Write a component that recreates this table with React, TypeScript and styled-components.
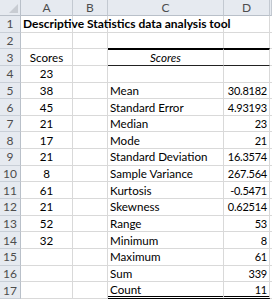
import React from "react";
import styled, { createGlobalStyle } from "styled-components";

const Global = createGlobalStyle`
  html, body { margin: 0; padding: 0; background: #ffffff; }
  body { font-family: Lato, "Liberation Sans", sans-serif; }
`;

const Sheet = styled.div`
  display: grid;
  grid-template-columns: 21px 52px 35px 116px 46px 2px;
  grid-template-rows: 16px repeat(17, 16.65px);
  width: 272px;
  height: 299px;
  overflow: hidden;
  font-size: 11.6px;
  color: #000;
`;

const Corner = styled.div`
  background: #e6eaf0;
  border-right: 1px solid #b9c0c9;
  border-bottom: 1px solid #b9c0c9;
  position: relative;
  &::after {
    content: "";
    position: absolute;
    right: 2px;
    bottom: 2px;
    width: 0;
    height: 0;
    border-left: 9px solid transparent;
    border-bottom: 9px solid #c8ccd2;
  }
`;

const ColHead = styled.div`
  background: #e6eaf0;
  border-right: 1px solid #c3c9d1;
  border-bottom: 1px solid #b9c0c9;
  color: #4d4d4d;
  display: flex;
  align-items: center;
  justify-content: center;
  font-size: 12px;
`;

const RowHead = styled.div`
  background: #e6eaf0;
  border-right: 1px solid #b9c0c9;
  border-bottom: 1px solid #c9cfd7;
  color: #4d4d4d;
  display: flex;
  align-items: center;
  justify-content: center;
  font-size: 12px;
`;

type CellProps = {
  $align?: "left" | "center" | "right";
  $bold?: boolean;
  $italic?: boolean;
  $top?: boolean;
  $under?: boolean;
  $double?: boolean;
  $overflow?: boolean;
  $num?: boolean;
};

const Cell = styled.div<CellProps>`
  position: relative;
  border-right: 1px solid #d9d9d9;
  border-bottom: ${(p) =>
    p.$double ? "3px double #000" : p.$under ? "1px solid #222" : "1px solid #d9d9d9"};
  border-top: ${(p) => (p.$top ? "2px solid #000" : "0")};
  display: flex;
  align-items: center;
  justify-content: ${(p) =>
    p.$align === "right" ? "flex-end" : p.$align === "center" ? "center" : "flex-start"};
  padding: 0 ${(p) => (p.$num ? "2px 0 0" : "2px")};
  font-size: ${(p) => (p.$bold ? "12px" : p.$num ? "11px" : "inherit")};
  letter-spacing: ${(p) => (p.$num ? "-0.25px" : "0")};
  font-weight: ${(p) => (p.$bold ? 700 : 400)};
  font-style: ${(p) => (p.$italic ? "italic" : "normal")};
  white-space: nowrap;
  overflow: ${(p) => (p.$overflow || p.$num ? "visible" : "hidden")};
  z-index: ${(p) => (p.$overflow ? 1 : 0)};
  margin-top: ${(p) => (p.$top ? "-1px" : "0")};
`;

const Edge = styled.div`
  border-bottom: 1px solid #d9d9d9;
`;

const stats: [string, string][] = [
  ["Mean", "30.8182"],
  ["Standard Error", "4.93193"],
  ["Median", "23"],
  ["Mode", "21"],
  ["Standard Deviation", "16.3574"],
  ["Sample Variance", "267.564"],
  ["Kurtosis", "-0.5471"],
  ["Skewness", "0.62514"],
  ["Range", "53"],
  ["Minimum", "8"],
  ["Maximum", "61"],
  ["Sum", "339"],
  ["Count", "11"],
];

const scores = ["23", "38", "45", "21", "17", "21", "8", "61", "21", "52", "32"];

export default function App() {
  const rows: React.ReactNode[] = [];
  for (let r = 1; r <= 17; r++) {
    let a = "";
    let c = "";
    let d = "";
    const cProps: CellProps = { $align: "left" };
    const dProps: CellProps = { $align: "right", $num: true };
    if (r === 3) {
      a = "Scores";
      c = "Scores";
      cProps.$align = "center";
      cProps.$italic = true;
      cProps.$top = true;
      cProps.$under = true;
      dProps.$top = true;
      dProps.$under = true;
    }
    if (r >= 4 && r <= 14) a = scores[r - 4];
    if (r >= 5) {
      c = stats[r - 5][0];
      d = stats[r - 5][1];
    }
    if (r === 17) {
      cProps.$double = true;
      dProps.$double = true;
    }
    rows.push(
      <React.Fragment key={r}>
        <RowHead>{r}</RowHead>
        {r === 1 ? (
          <Cell $bold $overflow>
            Descriptive Statistics data analysis tool
          </Cell>
        ) : (
          <Cell $align="center">{a}</Cell>
        )}
        <Cell />
        <Cell {...cProps}>{c}</Cell>
        <Cell {...dProps}>{d}</Cell>
        <Edge />
      </React.Fragment>
    );
  }
  return (
    <>
      <Global />
      <Sheet>
        <Corner />
        <ColHead>A</ColHead>
        <ColHead>B</ColHead>
        <ColHead>C</ColHead>
        <ColHead>D</ColHead>
        <ColHead />
        {rows}
      </Sheet>
    </>
  );
}
